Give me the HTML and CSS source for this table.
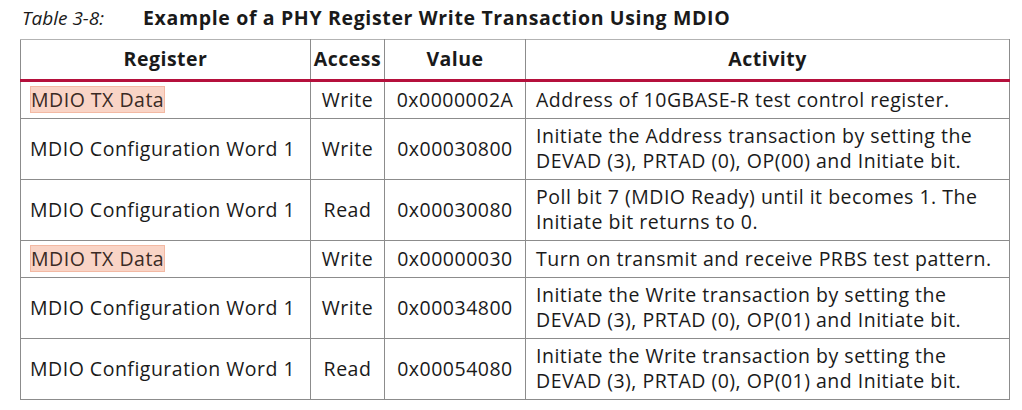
FILE: index.html
```html
<!DOCTYPE html>
<html>
<head>
<meta charset="utf-8">
<link rel="stylesheet" href="styles.css">
</head>
<body>
<div class="caption"><span class="num">Table 3-8:</span><span class="title">Example of a PHY Register Write Transaction Using MDIO</span></div>
<table class="tbl">
  <colgroup><col class="c1"><col class="c2"><col class="c3"><col class="c4"></colgroup>
  <thead>
    <tr><th>Register</th><th>Access</th><th>Value</th><th>Activity</th></tr>
  </thead>
  <tbody>
    <tr class="short"><td><span class="hl">MDIO TX Data</span></td><td class="ctr">Write</td><td class="ctr">0x0000002A</td><td>Address of 10GBASE-R test control register.</td></tr>
    <tr class="tall"><td>MDIO Configuration Word 1</td><td class="ctr">Write</td><td class="ctr">0x00030800</td><td>Initiate the Address transaction by setting the<br>DEVAD (3), PRTAD (0), OP(00) and Initiate bit.</td></tr>
    <tr class="tall"><td>MDIO Configuration Word 1</td><td class="ctr">Read</td><td class="ctr">0x00030080</td><td>Poll bit 7 (MDIO Ready) until it becomes 1. The<br>Initiate bit returns to 0.</td></tr>
    <tr class="short"><td><span class="hl">MDIO TX Data</span></td><td class="ctr">Write</td><td class="ctr">0x00000030</td><td>Turn on transmit and receive PRBS test pattern.</td></tr>
    <tr class="tall"><td>MDIO Configuration Word 1</td><td class="ctr">Write</td><td class="ctr">0x00034800</td><td>Initiate the Write transaction by setting the<br>DEVAD (3), PRTAD (0), OP(01) and Initiate bit.</td></tr>
    <tr class="tall"><td>MDIO Configuration Word 1</td><td class="ctr">Read</td><td class="ctr">0x00054080</td><td>Initiate the Write transaction by setting the<br>DEVAD (3), PRTAD (0), OP(01) and Initiate bit.</td></tr>
  </tbody>
</table>
</body>
</html>
```
FILE: styles.css
```css
html, body {
  margin: 0;
  padding: 0;
  background: #ffffff;
}
body {
  font-family: "Open Sans", "Noto Sans", sans-serif;
  color: #1a1a1a;
  padding: 0 0 0 20px;
}
.caption {
  height: 39px;
  display: flex;
  align-items: flex-start;
  padding-top: 5px;
  box-sizing: border-box;
  font-size: 19px;
  line-height: 26px;
}
.num {
  font-style: italic;
  width: 121px;
  padding-left: 2px;
}
.title {
  font-weight: bold;
  font-size: 19.5px;
  letter-spacing: 0.65px;
}
.tbl {
  border-collapse: collapse;
  width: 989px;
  table-layout: fixed;
  font-size: 19.5px;
  letter-spacing: 0.5px;
}
.c1 { width: 290px; }
.c2 { width: 74px; }
.c3 { width: 141px; }
.c4 { width: 484px; }
.tbl th, .tbl td {
  border: 1px solid #8c8c8c;
  padding: 0 9px 2px;
  vertical-align: middle;
  white-space: nowrap;
}
.tbl th {
  height: 37px;
  font-weight: bold;
  text-align: center;
  border-top-color: #b3b3b3;
  border-bottom: 3px solid #b5103c;
  padding: 0 0 2px;
}
.tbl td {
  line-height: 25px;
}
.tbl td:last-child {
  padding-left: 10px;
}
.tbl td.ctr {
  text-align: center;
  padding: 0 0 2px;
}
.short td { height: 34px; }
.tall td { height: 58px; }
.hl {
  display: inline-block;
  background: #f9d4c6;
  box-shadow: inset 0 0 0 1px #f3b9a3;
  padding: 1px 1px;
  color: #3a2a24;
}
```
